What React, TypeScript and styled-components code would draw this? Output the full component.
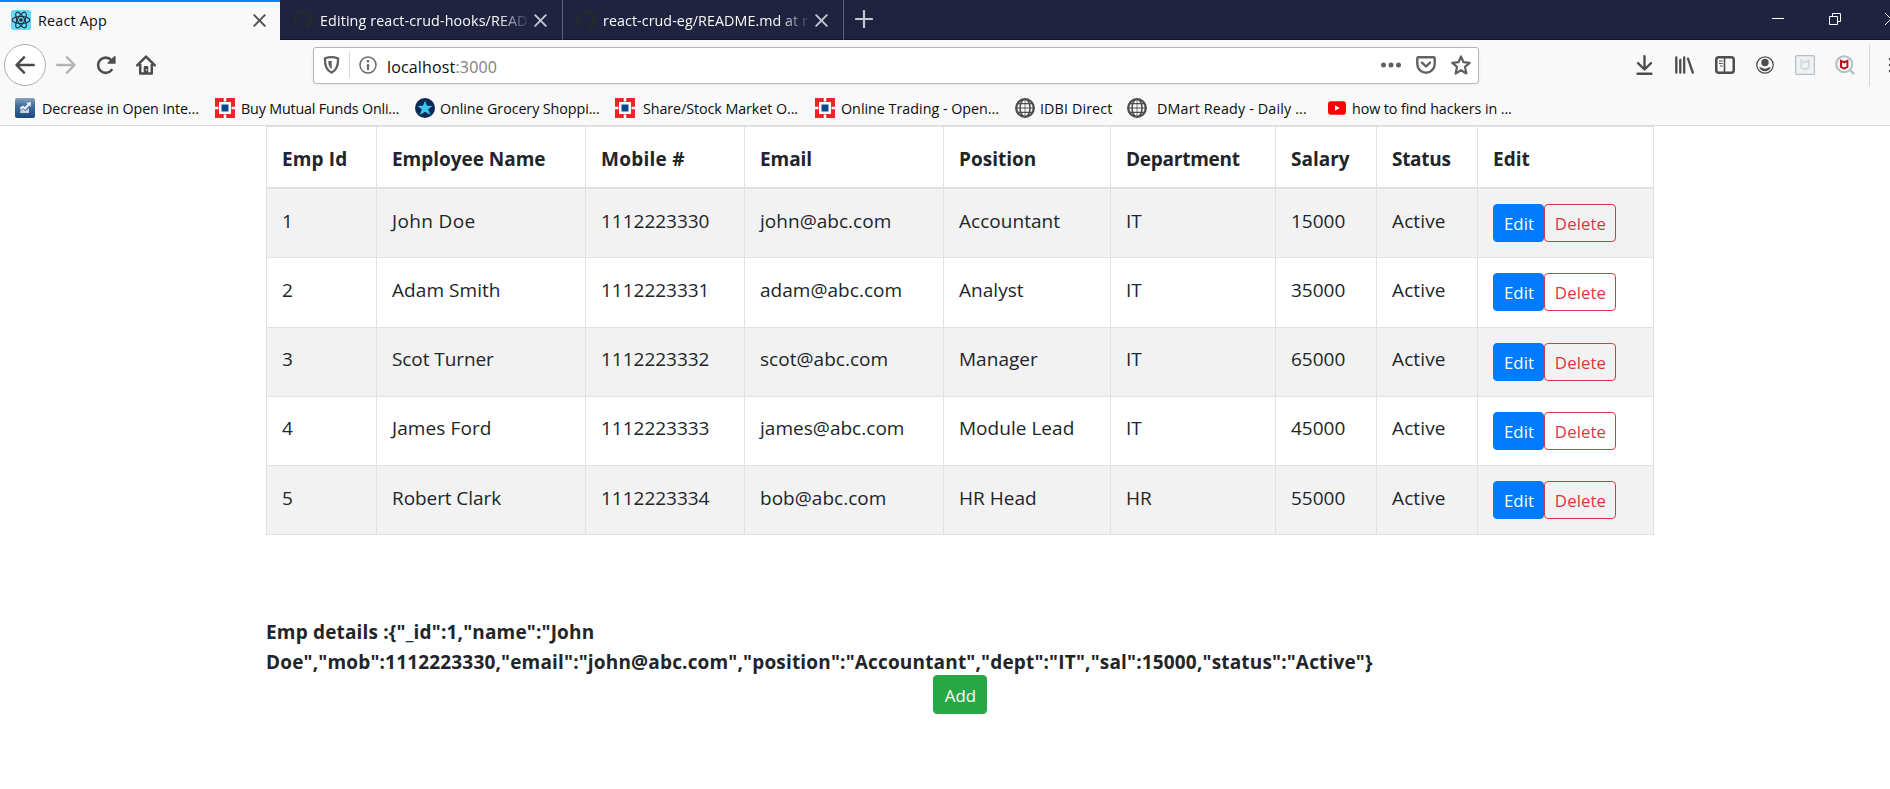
import React from 'react';
import styled, { createGlobalStyle, css } from 'styled-components';

const GlobalStyle = createGlobalStyle`
  *, *::before, *::after { box-sizing: border-box; }
  html, body { margin: 0; height: 100%; background: #fff; overflow: hidden; }
  body { font-family: 'Segoe UI', 'Open Sans', sans-serif; color: #212529; }
  svg { display: block; flex: none; }
`;

const Window = styled.div`
  width: 1890px;
  height: 789px;
  overflow: hidden;
  display: flex;
  flex-direction: column;
`;

/* ---------- tab strip ---------- */

const TabStrip = styled.div`
  height: 40px;
  flex: none;
  display: flex;
  background: #202340;
  box-shadow: inset 0 -1px 0 #14152c;
`;

const Tab = styled.div<{ $active?: boolean; $width: number }>`
  width: ${p => p.$width}px;
  height: 40px;
  flex: none;
  display: flex;
  align-items: center;
  padding: 0 15px 0 13px;
  font-size: 14.3px;
  color: #f9f9fa;
  border-right: 1px solid #5d5f75;
  ${p =>
    p.$active &&
    css`
      color: #0c0c0d;
      background: #f9f9fa;
      border-right: 0;
      border-top: 2px solid #0a84ff;
      padding: 0 14px 2px 11px;
    `}
`;

const TabTitle = styled.span<{ $fade?: boolean; $track: number }>`
  flex: 1;
  margin-left: 7px;
  padding-top: 2px;
  line-height: 20px;
  white-space: nowrap;
  letter-spacing: ${p => p.$track}px;
  ${p =>
    p.$fade &&
    css`
      mask-image: linear-gradient(to left, transparent 4px, #000 36px);
    `}
`;

const NewTab = styled.div`
  display: flex;
  align-items: center;
  padding: 0 0 3px 11px;
`;

const WindowControls = styled.div`
  margin-left: auto;
  display: flex;
  align-items: center;
  padding-bottom: 2px;
`;

/* ---------- navigation toolbar ---------- */

const Toolbar = styled.div`
  height: 50px;
  flex: none;
  display: flex;
  align-items: center;
  padding-left: 4px;
  background: #f9f9fa;
`;

const BackButton = styled.div`
  width: 42px;
  height: 42px;
  flex: none;
  border: 1px solid #aeaeaf;
  border-radius: 50%;
  background: #fff;
  display: flex;
  align-items: center;
  justify-content: center;
`;

const NavGroup = styled.div`
  display: flex;
  align-items: center;
  gap: 20px;
  margin-left: 10px;
`;

const UrlBar = styled.div`
  width: 1166px;
  height: 37px;
  flex: none;
  margin-left: 157px;
  display: flex;
  align-items: center;
  padding: 0 7px 0 9px;
  border: 1px solid #b5b5b6;
  border-radius: 3px;
  background: #fff;
  box-shadow: 0 1px 4px rgba(0, 0, 0, 0.06);
`;

const Separator = styled.div<{ $height: number; $inset?: number }>`
  width: 1px;
  height: ${p => p.$height}px;
  flex: none;
  margin: 0 ${p => p.$inset ?? 0}px;
  background: #d7d7db;
`;

const UrlText = styled.span`
  flex: 1;
  margin: 3px 0 0 10px;
  font-size: 16px;
  line-height: 24px;
  letter-spacing: 0.16px;
  color: #0c0c0d;
`;

const Port = styled.span`
  color: #808083;
`;

const UrlActions = styled.div`
  display: flex;
  align-items: center;
  gap: 15px;
`;

const ToolbarActions = styled.div`
  display: flex;
  align-items: center;
  gap: 20px;
  margin-left: 157px;
`;

const ToolbarEnd = styled.div`
  display: flex;
  align-items: center;
  gap: 17px;
  margin-left: 14px;
`;

/* ---------- bookmarks ---------- */

const BookmarksBar = styled.div`
  height: 35px;
  flex: none;
  display: flex;
  padding: 0 0 0 15px;
  background: #f9f9fa;
`;

const BookmarkItem = styled.div<{ $width: number }>`
  width: ${p => p.$width}px;
  flex: none;
  height: 36px;
  display: flex;
  align-items: center;
`;

const BookmarkLabel = styled.span<{ $gap: number; $track: number }>`
  margin-left: ${p => p.$gap}px;
  padding-top: 2px;
  font-size: 14.3px;
  line-height: 20px;
  white-space: nowrap;
  color: #0c0c0d;
  letter-spacing: ${p => p.$track}px;
`;

/* ---------- page ---------- */

const Page = styled.main`
  flex: 1;
  border-top: 1px solid #dcdce0;
  background: #fff;
`;

const Container = styled.div`
  width: 1388px;
  margin-left: 266px;
`;

const Table = styled.table`
  width: 1388px;
  table-layout: fixed;
  border-collapse: separate;
  border-spacing: 0;
  border: solid #dee2e6;
  border-width: 1px 0 0 1px;
  font-size: 19px;
  line-height: 30px;
`;

const Col = styled.col<{ $width: number }>`
  width: ${p => p.$width}px;
`;

const HeadCell = styled.th<{ $track: number }>`
  height: 62px;
  padding: 17px 15px 13px;
  text-align: left;
  vertical-align: top;
  font-weight: 700;
  white-space: nowrap;
  border: solid #dee2e6;
  border-width: 0 1px 2px 0;
  letter-spacing: ${p => p.$track}px;
`;

const Row = styled.tr<{ $height: number; $top: number }>`
  height: ${p => p.$height}px;
  &:nth-child(odd) { background: #f2f2f2; }
  & > td { padding-top: ${p => p.$top}px; }
`;

const Cell = styled.td<{ $track?: number }>`
  padding: 0 15px;
  vertical-align: top;
  white-space: nowrap;
  border: solid #dee2e6;
  border-width: 0 1px 1px 0;
  letter-spacing: ${p => p.$track ?? 0}px;
`;

const Actions = styled.div<{ $lift: number }>`
  display: flex;
  margin-top: -${p => p.$lift}px;
`;

const Button = styled.button<{ $kind: 'primary' | 'danger' | 'success'; $width: number }>`
  width: ${p => p.$width}px;
  height: 38px;
  padding: 2px 0 0 1px;
  border: 1px solid;
  border-radius: 4px;
  font-family: inherit;
  font-size: 16.8px;
  line-height: 26px;
  letter-spacing: 0.1px;
  ${p => p.$kind === 'primary' && css`color: #fff; background: #007bff; border-color: #007bff;`}
  ${p => p.$kind === 'danger' && css`color: #dc3545; background: transparent; border-color: #dc3545;`}
  ${p => p.$kind === 'success' && css`height: 39px; color: #fff; background: #28a745; border-color: #28a745;`}
`;

const Details = styled.div`
  width: 1120px;
  margin-top: 82px;
  font-size: 19px;
  font-weight: 700;
  line-height: 30px;
  letter-spacing: 0.17px;
`;

const AddRow = styled.div`
  display: flex;
  justify-content: center;
  margin-top: -2px;
`;

/* ---------- icons ---------- */

const ReactIcon = () => (
  <svg width="20" height="20" viewBox="0 0 20 20">
    <rect width="20" height="20" rx="2.5" fill="#61dafb" />
    <g fill="none" stroke="#222b33" strokeWidth="1.1">
      <ellipse cx="10" cy="10" rx="8.8" ry="3.5" />
      <ellipse cx="10" cy="10" rx="8.8" ry="3.5" transform="rotate(60 10 10)" />
      <ellipse cx="10" cy="10" rx="8.8" ry="3.5" transform="rotate(120 10 10)" />
    </g>
    <circle cx="10" cy="10" r="1.8" fill="#222b33" />
  </svg>
);

const CloseIcon = ({ color }: { color: string }) => (
  <svg width="13" height="13" viewBox="0 0 13 13">
    <path d="M1.2 1.2l10.6 10.6M11.8 1.2L1.2 11.8" stroke={color} strokeWidth="1.9" strokeLinecap="round" />
  </svg>
);

const GithubIcon = () => (
  <svg width="20" height="20" viewBox="0 0 16 16" fill="#24292e">
    <path d="M8 0C3.58 0 0 3.58 0 8c0 3.54 2.29 6.53 5.47 7.59.4.07.55-.17.55-.38 0-.19-.01-.82-.01-1.49-2.01.37-2.53-.49-2.69-.94-.09-.23-.48-.94-.82-1.13-.28-.15-.68-.52-.01-.53.63-.01 1.08.58 1.23.82.72 1.21 1.87.87 2.33.66.07-.52.28-.87.51-1.07-1.78-.2-3.64-.89-3.64-3.95 0-.87.31-1.59.82-2.15-.08-.2-.36-1.02.08-2.12 0 0 .67-.21 2.2.82a7.6 7.6 0 0 1 4 0c1.53-1.04 2.2-.82 2.2-.82.44 1.1.16 1.92.08 2.12.51.56.82 1.27.82 2.15 0 3.07-1.87 3.75-3.65 3.95.29.25.54.73.54 1.48 0 1.07-.01 1.93-.01 2.2 0 .21.15.46.55.38A8 8 0 0 0 16 8c0-4.42-3.58-8-8-8z" />
  </svg>
);

const PlusIcon = () => (
  <svg width="18" height="18" viewBox="0 0 18 18">
    <path d="M9 1v16M1 9h16" stroke="#c5c6d0" strokeWidth="2.2" strokeLinecap="round" />
  </svg>
);

const ControlsIcon = () => (
  <svg width="118" height="14" viewBox="0 0 118 14" fill="none" stroke="#fff" strokeWidth="1">
    <path d="M0 6.5h12" />
    <path d="M57.5 4.5h8v8h-8zM60.5 4.5v-3h8v8h-3" />
    <path d="M113 1l12 12M113 13l12-12" />
  </svg>
);

const BackIcon = () => (
  <svg width="20" height="20" viewBox="0 0 20 20" fill="none" stroke="#4a4a4c" strokeWidth="2.5" strokeLinecap="round" strokeLinejoin="round">
    <path d="M18.7 10H1.8M9 2.3L1.5 10 9 17.7" />
  </svg>
);

const ForwardIcon = () => (
  <svg width="20" height="20" viewBox="0 0 20 20" fill="none" stroke="#b4b4b5" strokeWidth="2.5" strokeLinecap="round" strokeLinejoin="round">
    <path d="M1.3 10h17M11 2.3l7.5 7.7-7.5 7.7" />
  </svg>
);

const ReloadIcon = () => (
  <svg width="20" height="20" viewBox="0 0 20 20">
    <path d="M15.3 5.1A7.6 7.6 0 1 0 15.6 15" fill="none" stroke="#4d4d4f" strokeWidth="2.6" strokeLinecap="round" />
    <path d="M18.2 1.2c.7-.6 1.4-.3 1.4.5v7.1h-7.2c-.9 0-1.2-.8-.6-1.4z" fill="#4d4d4f" />
  </svg>
);

const HomeIcon = () => (
  <svg width="20" height="20" viewBox="0 0 20 20">
    <path d="M1.2 10.4L10 1.6l8.8 8.8" fill="none" stroke="#4d4d4f" strokeWidth="2.5" strokeLinecap="round" strokeLinejoin="round" />
    <path d="M4.2 9v9.6h11.6V9" fill="none" stroke="#4d4d4f" strokeWidth="2.5" strokeLinejoin="round" />
    <path d="M7.7 19v-7a1 1 0 0 1 1-1h2.6a1 1 0 0 1 1 1v7z" fill="#4d4d4f" />
    <circle cx="10.5" cy="15" r="0.8" fill="#f9f9fa" />
  </svg>
);

const ShieldIcon = () => (
  <svg width="17" height="18" viewBox="0 0 17 18">
    <path d="M8.5 1.2c2.3 0 4.7.5 6.6 1.1.2 6.4-.7 11.8-6.6 14.3C2.6 14.1 1.7 8.7 1.9 2.3 3.8 1.7 6.2 1.2 8.5 1.2z" fill="none" stroke="#616163" strokeWidth="2.3" strokeLinejoin="round" />
    <path d="M8.7 4.7v8.5C6.2 11.5 5.3 9.1 5.2 5.2c1.2-.3 2.3-.5 3.5-.5z" fill="#616163" />
  </svg>
);

const InfoIcon = () => (
  <svg width="18" height="18" viewBox="0 0 18 18">
    <circle cx="9" cy="9" r="8" fill="none" stroke="#68686a" strokeWidth="1.5" />
    <circle cx="9" cy="5.2" r="1.3" fill="#68686a" />
    <path d="M9 8.8v4.5" stroke="#68686a" strokeWidth="2.2" strokeLinecap="round" />
  </svg>
);

const DotsIcon = () => (
  <svg width="20" height="20" viewBox="0 0 20 20" fill="#5f5f61">
    <circle cx="2.5" cy="10" r="2.5" />
    <circle cx="10" cy="10" r="2.5" />
    <circle cx="17.5" cy="10" r="2.5" />
  </svg>
);

const PocketIcon = () => (
  <svg width="20" height="18" viewBox="0 0 20 18" fill="none" stroke="#616163" strokeWidth="2.4" strokeLinecap="round" strokeLinejoin="round">
    <path d="M2.5 1.3h15c.7 0 1.2.5 1.2 1.2V8a8.7 8.7 0 0 1-17.4 0V2.5c0-.7.5-1.2 1.2-1.2z" />
    <path d="M6 6.6l4 3.9 4-3.9" />
  </svg>
);

const StarIcon = () => (
  <svg width="20" height="20" viewBox="0 0 20 20" fill="none" stroke="#616163" strokeWidth="2.2" strokeLinejoin="round">
    <path d="M10 1.5l2.5 5.7 6.2.6-4.7 4.1 1.4 6.6L10 15.2l-5.4 3.3L6 11.9 1.3 7.8l6.2-.6z" />
  </svg>
);

const DownloadIcon = () => (
  <svg width="17" height="20" viewBox="0 0 17 20" fill="none" stroke="#4d4d4f" strokeWidth="2.4" strokeLinecap="round" strokeLinejoin="round">
    <path d="M8.5 1.3v12.4M2 8.2l6.5 6.3L15 8.2M1.6 18.7h13.8" />
  </svg>
);

const LibraryIcon = () => (
  <svg width="22" height="18" viewBox="-2 0 22 18" fill="none" stroke="#4d4d4f" strokeWidth="2.3" strokeLinecap="round">
    <path d="M1.3 1.3v15.4M5.3 4v12.7M9.2 1.3v15.4M13 2.6l4.8 14" />
  </svg>
);

const SidebarIcon = () => (
  <svg width="20" height="18" viewBox="0 0 20 18">
    <rect x="1.25" y="1.25" width="17.5" height="15.5" rx="2.5" fill="none" stroke="#4d4d4f" strokeWidth="2.5" />
    <path d="M9.5 2v14" stroke="#4d4d4f" strokeWidth="1.6" />
    <path d="M4 5h3.7M4 7.5h3.7M5 10h2.7" stroke="#4d4d4f" strokeWidth="1.2" />
  </svg>
);

const AccountIcon = () => (
  <svg width="20" height="18" viewBox="-1 0 20 18">
    <circle cx="9" cy="9" r="8.2" fill="none" stroke="#4d4d4f" strokeWidth="1.3" />
    <circle cx="9" cy="6.5" r="3.7" fill="#4d4d4f" />
    <path d="M3.2 11.3c1.2-.4 2.3 0 3.1.7 1.6 1 3.8 1 5.4 0 .8-.7 1.9-1.1 3.1-.7-.7 2.3-3 4-5.8 4s-5.1-1.7-5.8-4z" fill="#4d4d4f" />
  </svg>
);

const ShieldBadgeIcon = () => (
  <svg width="20" height="20" viewBox="0 0 20 20">
    <rect x="0.6" y="0.6" width="18.8" height="18.8" rx="1" fill="#eff1f2" stroke="#b4bfc5" strokeWidth="1.2" />
    <path d="M6.2 5.6L10 7.4l3.8-1.8v7L10 14.7l-3.8-2.1z" fill="none" stroke="#d3dadd" strokeWidth="1.9" />
  </svg>
);

const ShieldSearchIcon = () => (
  <svg width="20" height="20" viewBox="0 0 20 20">
    <circle cx="9.2" cy="9.2" r="8" fill="#f4f7f8" stroke="#afc0c8" strokeWidth="2" />
    <path d="M15.3 15.3l3.8 3.8" stroke="#afc0c8" strokeWidth="2.3" />
    <path d="M6 5.8l3.2 1.6 3.2-1.6v6L9.2 13.6 6 11.8z" fill="none" stroke="#b9151b" strokeWidth="2" />
  </svg>
);

const MenuIcon = () => (
  <svg width="20" height="18" viewBox="0 0 20 18">
    <path d="M3 3h15.5M3 9h15.5M3 15h15.5" stroke="#4d4d4f" strokeWidth="2.5" strokeLinecap="round" />
  </svg>
);

const ChartIcon = () => (
  <svg width="20" height="20" viewBox="0 0 20 20">
    <defs>
      <linearGradient id="chart-bg" x1="0" y1="0" x2="0" y2="1">
        <stop offset="0" stopColor="#86a3bf" />
        <stop offset="0.35" stopColor="#48719a" />
        <stop offset="1" stopColor="#174a7d" />
      </linearGradient>
    </defs>
    <rect width="20" height="20" rx="2" fill="url(#chart-bg)" />
    <path d="M5 9.5l3-2 2 1.5 2.5-3L11 4.8l5-.8-.5 5-1.3-1.5L10.5 12 8.2 10.2 5.5 12z" fill="#e6ecf2" />
    <path d="M5.5 12.5l2.7-1.5 2.3 2L14 10v5H5z" fill="#c6d3e0" />
  </svg>
);

const BankIcon = () => (
  <svg width="20" height="20" viewBox="0 0 20 20">
    <rect width="20" height="20" fill="#ed232a" />
    <path d="M8.7 0h2.6v3.5h-2.6zM8.7 16.5h2.6V20h-2.6zM0 8.7h3.5v2.6H0zM16.5 8.7H20v2.6h-3.5zM4 4h12v12h-12z" fill="#fff" />
    <rect x="6.5" y="6.5" width="7" height="7" fill="#004c8f" />
  </svg>
);

const GroceryIcon = () => (
  <svg width="20" height="20" viewBox="0 0 20 20">
    <circle cx="10" cy="10" r="10" fill="#0a2a55" />
    <path d="M10 2.7l2 5 5.5.3-4.4 3.3L15.5 17 10 13.7 4.9 17l1.9-5.7L2.7 8l5.3-.3z" fill="#38c6f4" />
  </svg>
);

const GlobeIcon = () => (
  <svg width="20" height="20" viewBox="0 0 20 20" fill="none" stroke="#4d4d4f">
    <circle cx="10" cy="10" r="8.8" strokeWidth="2.3" />
    <ellipse cx="10" cy="10" rx="5" ry="8.8" strokeWidth="1.5" />
    <path d="M1.5 10h17M2.5 5.7h15M2.5 14.3h15" strokeWidth="1.2" />
    <path d="M10 1v18" strokeWidth="0.7" />
  </svg>
);

const YoutubeIcon = () => (
  <svg width="18" height="20" viewBox="0 0 18 20">
    <rect y="3.3" width="18" height="13.4" rx="3" fill="#f00" />
    <path d="M7 7.3v5.4l4.7-2.7z" fill="#fff" />
  </svg>
);

/* ---------- data ---------- */

const bookmarks = [
  { icon: <ChartIcon />, label: 'Decrease in Open Inte...', width: 200, gap: 7, track: -0.1 },
  { icon: <BankIcon />, label: 'Buy Mutual Funds Onli...', width: 200, gap: 6, track: -0.17 },
  { icon: <GroceryIcon />, label: 'Online Grocery Shoppi...', width: 200, gap: 5, track: -0.08 },
  { icon: <BankIcon />, label: 'Share/Stock Market O...', width: 200, gap: 8, track: -0.07 },
  { icon: <BankIcon />, label: 'Online Trading - Open...', width: 200, gap: 6, track: 0 },
  { icon: <GlobeIcon />, label: 'IDBI Direct', width: 112, gap: 5, track: 0.12 },
  { icon: <GlobeIcon />, label: 'DMart Ready - Daily ...', width: 201, gap: 10, track: 0.16 },
  { icon: <YoutubeIcon />, label: 'how to find hackers in ...', width: 200, gap: 6, track: -0.09 },
];

const columns = [
  { title: 'Emp Id', width: 110, track: 0.15 },
  { title: 'Employee Name', width: 209, track: -0.03 },
  { title: 'Mobile #', width: 159, track: 0.25 },
  { title: 'Email', width: 199, track: -0.05 },
  { title: 'Position', width: 167, track: 0 },
  { title: 'Department', width: 165, track: -0.25 },
  { title: 'Salary', width: 101, track: 0 },
  { title: 'Status', width: 101, track: -0.3 },
  { title: 'Edit', width: 176, track: 0 },
];

const employees = [
  { id: 1, name: 'John Doe', mob: 1112223330, email: 'john@abc.com', position: 'Accountant', dept: 'IT', sal: 15000, height: 69, top: 17, nameTrack: 0.35 },
  { id: 2, name: 'Adam Smith', mob: 1112223331, email: 'adam@abc.com', position: 'Analyst', dept: 'IT', sal: 35000, height: 70, top: 17, nameTrack: 0.06 },
  { id: 3, name: 'Scot Turner', mob: 1112223332, email: 'scot@abc.com', position: 'Manager', dept: 'IT', sal: 65000, height: 69, top: 16, nameTrack: -0.08 },
  { id: 4, name: 'James Ford', mob: 1112223333, email: 'james@abc.com', position: 'Module Lead', dept: 'IT', sal: 45000, height: 69, top: 16, nameTrack: 0.1 },
  { id: 5, name: 'Robert Clark', mob: 1112223334, email: 'bob@abc.com', position: 'HR Head', dept: 'HR', sal: 55000, height: 69, top: 17, nameTrack: -0.08 },
];

const { id, name, mob, email, position, dept, sal } = employees[0];
const selected = JSON.stringify({ _id: id, name, mob, email, position, dept, sal, status: 'Active' });

export default function App() {
  return (
    <Window>
      <GlobalStyle />
      <TabStrip>
        <Tab $active $width={280}>
          <ReactIcon />
          <TabTitle $track={0.22}>React App</TabTitle>
          <CloseIcon color="#4d4d4f" />
        </Tab>
        <Tab $width={283}>
          <GithubIcon />
          <TabTitle $fade $track={0.12}>Editing react-crud-hooks/READ</TabTitle>
          <CloseIcon color="#c5c6d0" />
        </Tab>
        <Tab $width={281}>
          <GithubIcon />
          <TabTitle $fade $track={0.06}>react-crud-eg/README.md at r</TabTitle>
          <CloseIcon color="#c5c6d0" />
        </Tab>
        <NewTab><PlusIcon /></NewTab>
        <WindowControls><ControlsIcon /></WindowControls>
      </TabStrip>

      <Toolbar>
        <BackButton><BackIcon /></BackButton>
        <NavGroup>
          <ForwardIcon />
          <ReloadIcon />
          <HomeIcon />
        </NavGroup>
        <UrlBar>
          <ShieldIcon />
          <Separator $height={26} $inset={9} />
          <InfoIcon />
          <UrlText>localhost<Port>:3000</Port></UrlText>
          <UrlActions>
            <DotsIcon />
            <PocketIcon />
            <StarIcon />
          </UrlActions>
        </UrlBar>
        <ToolbarActions>
          <DownloadIcon />
          <LibraryIcon />
          <SidebarIcon />
          <AccountIcon />
          <ShieldBadgeIcon />
          <ShieldSearchIcon />
        </ToolbarActions>
        <ToolbarEnd>
          <Separator $height={42} />
          <MenuIcon />
        </ToolbarEnd>
      </Toolbar>

      <BookmarksBar>
        {bookmarks.map(b => (
          <BookmarkItem key={b.label} $width={b.width}>
            {b.icon}
            <BookmarkLabel $gap={b.gap} $track={b.track}>{b.label}</BookmarkLabel>
          </BookmarkItem>
        ))}
      </BookmarksBar>

      <Page>
        <Container>
          <Table>
            <colgroup>
              {columns.map(c => <Col key={c.title} $width={c.width} />)}
            </colgroup>
            <thead>
              <tr>
                {columns.map(c => <HeadCell key={c.title} $track={c.track}>{c.title}</HeadCell>)}
              </tr>
            </thead>
            <tbody>
              {employees.map(e => (
                <Row key={e.id} $height={e.height} $top={e.top}>
                  <Cell>{e.id}</Cell>
                  <Cell $track={e.nameTrack}>{e.name}</Cell>
                  <Cell $track={-0.02}>{e.mob}</Cell>
                  <Cell $track={0.03}>{e.email}</Cell>
                  <Cell $track={0.03}>{e.position}</Cell>
                  <Cell>{e.dept}</Cell>
                  <Cell>{e.sal}</Cell>
                  <Cell $track={0.12}>Active</Cell>
                  <Cell>
                    <Actions $lift={e.top - 15}>
                      <Button $kind="primary" $width={51}>Edit</Button>
                      <Button $kind="danger" $width={72}>Delete</Button>
                    </Actions>
                  </Cell>
                </Row>
              ))}
            </tbody>
          </Table>
          <Details>{`Emp details :${selected}`}</Details>
          <AddRow><Button $kind="success" $width={54}>Add</Button></AddRow>
        </Container>
      </Page>
    </Window>
  );
}
